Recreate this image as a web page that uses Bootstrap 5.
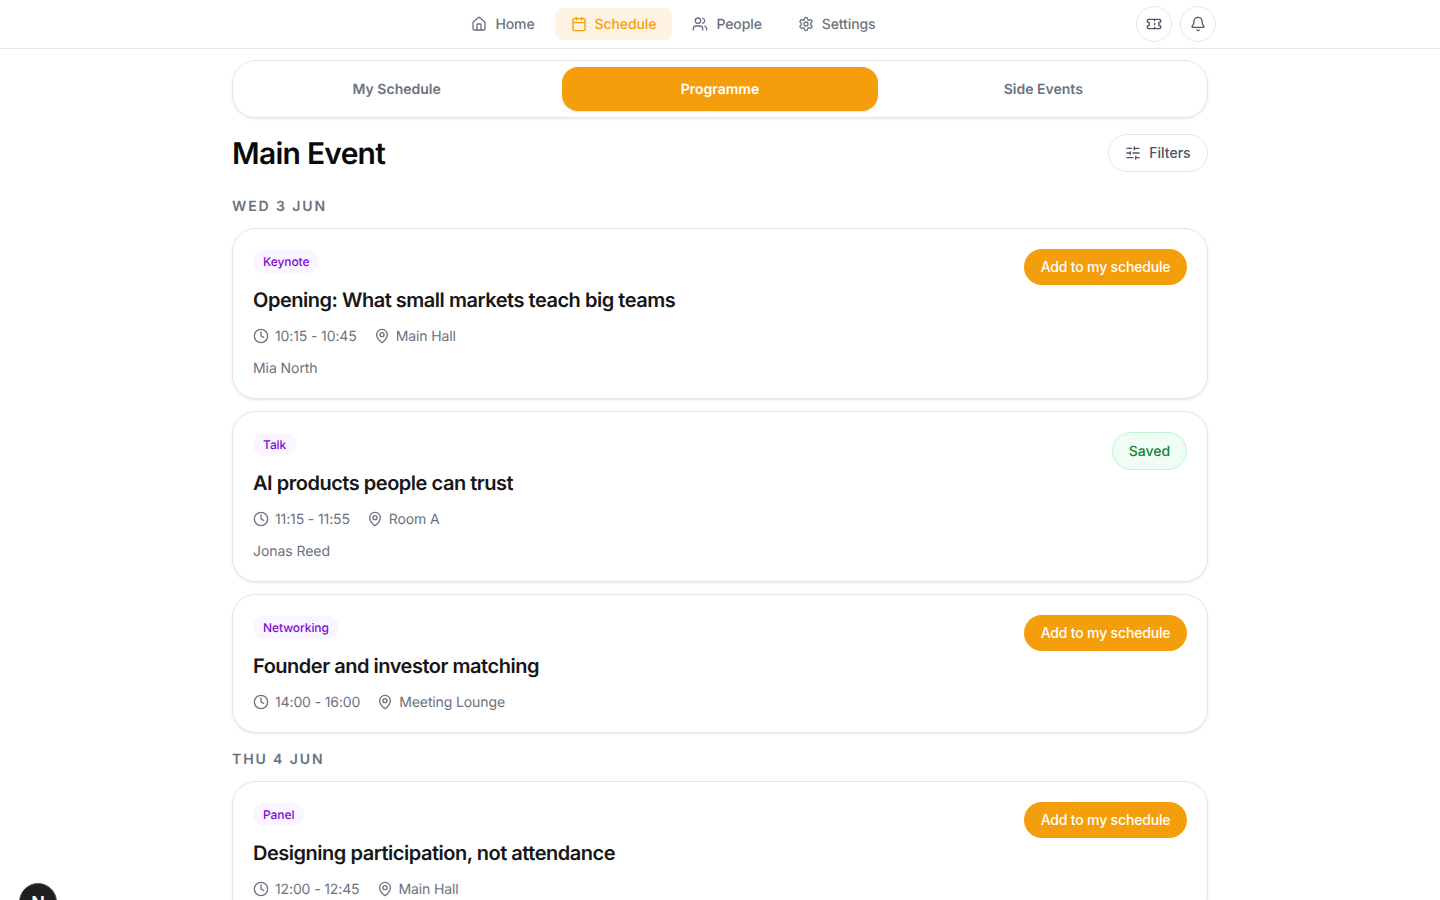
<!DOCTYPE html>
<html lang="en">
<head>
    <meta charset="UTF-8">
    <title>Schedule</title>
    <link rel="stylesheet" href="https://cdn.jsdelivr.net/npm/bootstrap@5.3.0/dist/css/bootstrap.min.css">
    <style>
        html, body { height: 900px; overflow: hidden; }
        body { font-family: Inter, "Liberation Sans", sans-serif; background: #fff; color: #0a0a0a; text-rendering: geometricPrecision; }
        svg { fill: none; stroke: currentColor; stroke-width: 2; stroke-linecap: round; stroke-linejoin: round; flex-shrink: 0; }
        .top-bar { height: 49px; border-bottom: 1px solid #e5e7eb; }
        .top-inner { width: 992px; height: 48px; margin: 0 auto; }
        .top-links { gap: 4px; }
        .top-link { height: 32px; padding: 0 16px; gap: 8px; border-radius: 8px; font-size: 14px; font-weight: 500; letter-spacing: -.1px; color: #6b7280; text-decoration: none; }
        .top-link.on { background: #fef3e2; color: #f59e0b; }
        .top-actions { margin-left: 13px; gap: 8px; }
        .round-btn { width: 36px; height: 36px; border: 1px solid #e5e7eb; border-radius: 50%; background: #fff; color: #4b5563; padding: 0; }
        .page-wrap { width: 976px; margin: 0 auto; padding-top: 11px; }
        .tab-strip { border: 1px solid #e5e7eb; border-radius: 24px; padding: 6px; gap: 8px; box-shadow: 0 1px 3px rgba(0,0,0,.1); height: 58px; }
        .tab-item { flex: 1 1 0; border-radius: 16px; font-size: 14px; font-weight: 600; color: #6b7280; }
        .tab-item.on { background: #f59e0b; color: #fff; box-shadow: 0 1px 2px rgba(0,0,0,.1); }
        .page-title { font-size: 30px; font-weight: 600; letter-spacing: -.75px; margin: 0; padding-top: 2px; color: #0a0a0a; line-height: 36px; }
        .filter-btn { height: 38px; width: 100px; border: 1px solid #e5e7eb; border-radius: 19px; background: #fff; color: #4b5563; font-size: 14px; font-weight: 500; gap: 8px; padding: 0 0 2px; }
        .filter-btn svg { margin-top: 2px; }
        .day-label { font-size: 14px; font-weight: 600; letter-spacing: 1.9px; color: #6b7280; line-height: 20px; margin: 0 0 11px; padding-top: 1px; }
        .session { border: 1px solid #e5e7eb; border-radius: 24px; padding: 20px 20px 18px; box-shadow: 0 1px 3px rgba(0,0,0,.1); margin-bottom: 12px; background: #fff; }
        .tag { display: block; width: fit-content; height: 23px; margin-top: 1px; background: #faf5ff; color: #7e0ad1; font-size: 12px; font-weight: 500; letter-spacing: -.08px; line-height: 23px; padding: 0 10px; border-radius: 12px; }
        .session-title { font-size: 20px; font-weight: 600; letter-spacing: -.48px; line-height: 28px; margin: 13px 0 0; color: #171717; }
        .meta-row { margin-top: 12px; gap: 17px; font-size: 14px; line-height: 22px; letter-spacing: -.12px; color: #6b7280; }
        .meta-item { gap: 6px; }
        .meta-item svg { margin-bottom: 2px; }
        .speaker { margin-top: 10px; font-size: 14px; line-height: 22px; letter-spacing: -.06px; color: #6b7280; }
        .add-btn { height: 36px; width: 163px; border: 0; border-radius: 18px; background: #f59e0b; color: #fff; font-size: 14px; font-weight: 500; letter-spacing: -.17px; padding: 0 0 2px; }
        .saved-pill { height: 38px; width: 75px; border: 1px solid #bbf7d0; border-radius: 19px; background: #f0fdf4; color: #15803d; font-size: 14px; font-weight: 500; }
        .dev-mark { position: fixed; left: 19px; top: 883px; width: 38px; height: 38px; padding-top: 2px; border-radius: 50%; background: #1f1f1f; border: 1px solid #555; color: #fff; font-size: 18px; font-weight: 600; }
    </style>
</head>
<body>
<header class="top-bar">
    <div class="top-inner d-flex align-items-center">
        <nav class="top-links d-flex flex-grow-1 justify-content-center">
            <a class="top-link d-flex align-items-center" href="#">
                <svg width="16" height="16" viewBox="0 0 24 24"><path d="M15 21v-8a1 1 0 0 0-1-1h-4a1 1 0 0 0-1 1v8"/><path d="M3 10a2 2 0 0 1 .709-1.528l7-5.999a2 2 0 0 1 2.582 0l7 5.999A2 2 0 0 1 21 10v9a2 2 0 0 1-2 2H5a2 2 0 0 1-2-2z"/></svg>Home</a>
            <a class="top-link on d-flex align-items-center" href="#">
                <svg width="16" height="16" viewBox="0 0 24 24"><path d="M8 2v4"/><path d="M16 2v4"/><rect width="18" height="18" x="3" y="4" rx="2"/><path d="M3 10h18"/></svg>Schedule</a>
            <a class="top-link d-flex align-items-center" href="#">
                <svg width="16" height="16" viewBox="0 0 24 24"><path d="M16 21v-2a4 4 0 0 0-4-4H6a4 4 0 0 0-4 4v2"/><path d="M16 3.128a4 4 0 0 1 0 7.744"/><path d="M22 21v-2a4 4 0 0 0-3-3.87"/><circle cx="9" cy="7" r="4"/></svg>People</a>
            <a class="top-link d-flex align-items-center" href="#">
                <svg width="16" height="16" viewBox="0 0 24 24"><path d="M12.22 2h-.44a2 2 0 0 0-2 2v.18a2 2 0 0 1-1 1.73l-.43.25a2 2 0 0 1-2 0l-.15-.08a2 2 0 0 0-2.73.73l-.22.38a2 2 0 0 0 .73 2.73l.15.1a2 2 0 0 1 1 1.72v.51a2 2 0 0 1-1 1.74l-.15.09a2 2 0 0 0-.73 2.73l.22.38a2 2 0 0 0 2.73.73l.15-.08a2 2 0 0 1 2 0l.43.25a2 2 0 0 1 1 1.73V20a2 2 0 0 0 2 2h.44a2 2 0 0 0 2-2v-.18a2 2 0 0 1 1-1.73l.43-.25a2 2 0 0 1 2 0l.15.08a2 2 0 0 0 2.73-.73l.22-.39a2 2 0 0 0-.73-2.73l-.15-.08a2 2 0 0 1-1-1.74v-.5a2 2 0 0 1 1-1.74l.15-.09a2 2 0 0 0 .73-2.73l-.22-.38a2 2 0 0 0-2.73-.73l-.15.08a2 2 0 0 1-2 0l-.43-.25a2 2 0 0 1-1-1.73V4a2 2 0 0 0-2-2z"/><circle cx="12" cy="12" r="3"/></svg>Settings</a>
        </nav>
        <div class="top-actions d-flex">
            <button class="round-btn d-flex align-items-center justify-content-center" type="button" aria-label="Ticket">
                <svg width="16" height="16" viewBox="0 0 24 24"><path d="M2 9a3 3 0 0 1 0 6v2a2 2 0 0 0 2 2h16a2 2 0 0 0 2-2v-2a3 3 0 0 1 0-6V7a2 2 0 0 0-2-2H4a2 2 0 0 0-2 2Z"/><path d="M13 5v2"/><path d="M13 17v2"/><path d="M13 11v2"/></svg>
            </button>
            <button class="round-btn d-flex align-items-center justify-content-center" type="button" aria-label="Notifications">
                <svg width="16" height="16" viewBox="0 0 24 24"><path d="M10.268 21a2 2 0 0 0 3.464 0"/><path d="M3.262 15.326A1 1 0 0 0 4 17h16a1 1 0 0 0 .74-1.673C19.41 13.956 18 12.499 18 8A6 6 0 0 0 6 8c0 4.499-1.411 5.956-2.738 7.326"/></svg>
            </button>
        </div>
    </div>
</header>
<main class="page-wrap">
    <div class="tab-strip d-flex">
        <div class="tab-item d-flex align-items-center justify-content-center">My Schedule</div>
        <div class="tab-item on d-flex align-items-center justify-content-center">Programme</div>
        <div class="tab-item d-flex align-items-center justify-content-center">Side Events</div>
    </div>
    <div class="d-flex justify-content-between align-items-center mt-3 mb-4">
        <h1 class="page-title">Main Event</h1>
        <button class="filter-btn d-flex align-items-center justify-content-center" type="button">
            <svg width="16" height="16" viewBox="0 0 24 24"><path d="M10 5H3"/><path d="M12 19H3"/><path d="M14 3v4"/><path d="M16 17v4"/><path d="M21 12h-9"/><path d="M21 19h-5"/><path d="M21 5h-7"/><path d="M8 10v4"/><path d="M8 12H3"/></svg>Filters</button>
    </div>

    <h2 class="day-label">WED 3 JUN</h2>

    <article class="session">
        <div class="d-flex justify-content-between align-items-start">
            <div>
                <span class="tag">Keynote</span>
                <h3 class="session-title">Opening: What small markets teach big teams</h3>
            </div>
            <button class="add-btn" type="button">Add to my schedule</button>
        </div>
        <div class="meta-row d-flex">
            <span class="meta-item d-flex align-items-center"><svg width="16" height="16" viewBox="0 0 24 24"><circle cx="12" cy="12" r="10"/><path d="M12 6v6l4 2"/></svg>10:15 - 10:45</span>
            <span class="meta-item d-flex align-items-center"><svg width="16" height="16" viewBox="0 0 24 24"><path d="M20 10c0 4.993-5.539 10.193-7.399 11.799a1 1 0 0 1-1.202 0C9.539 20.193 4 14.993 4 10a8 8 0 0 1 16 0"/><circle cx="12" cy="10" r="3"/></svg>Main Hall</span>
        </div>
        <div class="speaker">Mia North</div>
    </article>

    <article class="session">
        <div class="d-flex justify-content-between align-items-start">
            <div>
                <span class="tag">Talk</span>
                <h3 class="session-title">AI products people can trust</h3>
            </div>
            <div class="saved-pill d-flex align-items-center justify-content-center">Saved</div>
        </div>
        <div class="meta-row d-flex">
            <span class="meta-item d-flex align-items-center"><svg width="16" height="16" viewBox="0 0 24 24"><circle cx="12" cy="12" r="10"/><path d="M12 6v6l4 2"/></svg>11:15 - 11:55</span>
            <span class="meta-item d-flex align-items-center"><svg width="16" height="16" viewBox="0 0 24 24"><path d="M20 10c0 4.993-5.539 10.193-7.399 11.799a1 1 0 0 1-1.202 0C9.539 20.193 4 14.993 4 10a8 8 0 0 1 16 0"/><circle cx="12" cy="10" r="3"/></svg>Room A</span>
        </div>
        <div class="speaker">Jonas Reed</div>
    </article>

    <article class="session">
        <div class="d-flex justify-content-between align-items-start">
            <div>
                <span class="tag">Networking</span>
                <h3 class="session-title">Founder and investor matching</h3>
            </div>
            <button class="add-btn" type="button">Add to my schedule</button>
        </div>
        <div class="meta-row d-flex">
            <span class="meta-item d-flex align-items-center"><svg width="16" height="16" viewBox="0 0 24 24"><circle cx="12" cy="12" r="10"/><path d="M12 6v6l4 2"/></svg>14:00 - 16:00</span>
            <span class="meta-item d-flex align-items-center"><svg width="16" height="16" viewBox="0 0 24 24"><path d="M20 10c0 4.993-5.539 10.193-7.399 11.799a1 1 0 0 1-1.202 0C9.539 20.193 4 14.993 4 10a8 8 0 0 1 16 0"/><circle cx="12" cy="10" r="3"/></svg>Meeting Lounge</span>
        </div>
    </article>

    <h2 class="day-label mt-3">THU 4 JUN</h2>

    <article class="session">
        <div class="d-flex justify-content-between align-items-start">
            <div>
                <span class="tag">Panel</span>
                <h3 class="session-title">Designing participation, not attendance</h3>
            </div>
            <button class="add-btn" type="button">Add to my schedule</button>
        </div>
        <div class="meta-row d-flex">
            <span class="meta-item d-flex align-items-center"><svg width="16" height="16" viewBox="0 0 24 24"><circle cx="12" cy="12" r="10"/><path d="M12 6v6l4 2"/></svg>12:00 - 12:45</span>
            <span class="meta-item d-flex align-items-center"><svg width="16" height="16" viewBox="0 0 24 24"><path d="M20 10c0 4.993-5.539 10.193-7.399 11.799a1 1 0 0 1-1.202 0C9.539 20.193 4 14.993 4 10a8 8 0 0 1 16 0"/><circle cx="12" cy="10" r="3"/></svg>Main Hall</span>
        </div>
    </article>
</main>
<div class="dev-mark d-flex align-items-center justify-content-center">N</div>
<script src="https://cdn.jsdelivr.net/npm/bootstrap@5.3.0/dist/js/bootstrap.bundle.min.js"></script>
</body>
</html>
